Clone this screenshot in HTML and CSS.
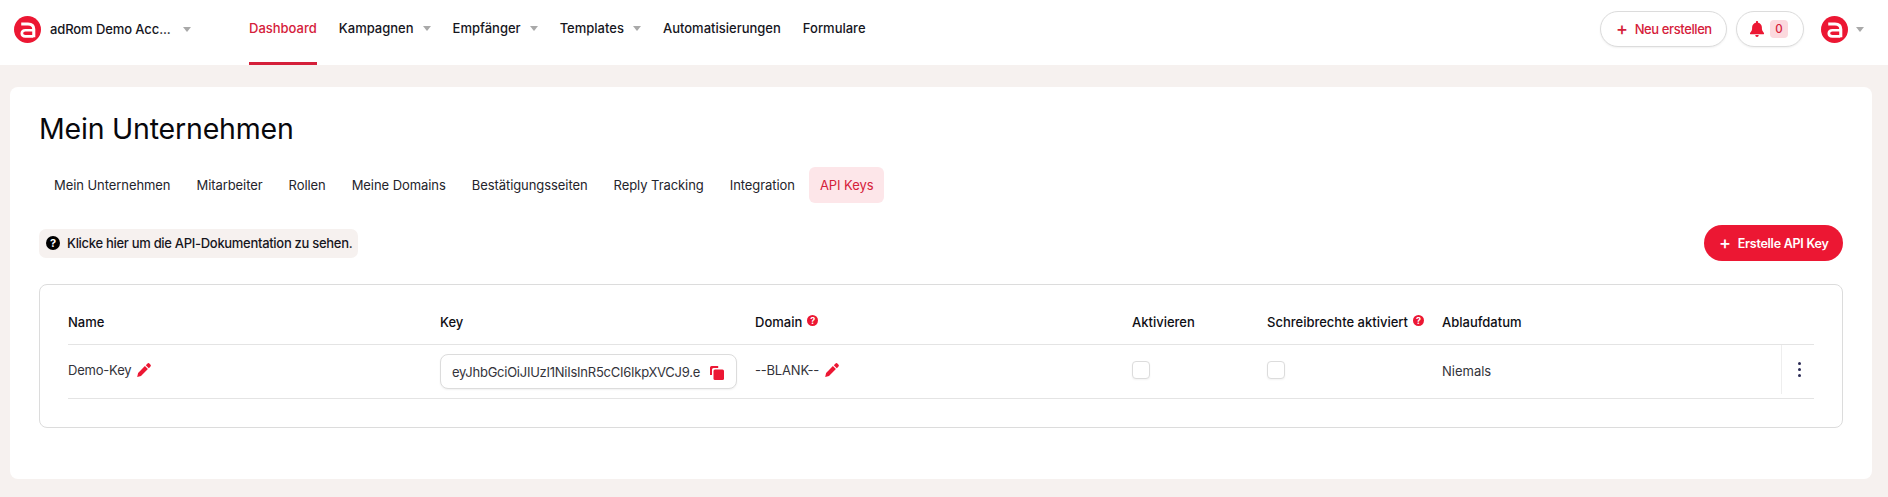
FILE: index.html
```html
<!DOCTYPE html>
<html lang="de">
<head>
  <meta charset="UTF-8" />
  <meta name="viewport" content="width=device-width, initial-scale=1.0"/>
  <title>API Keys</title>
  <link rel="stylesheet" href="styles.css">
</head>
<body>
  <header class="topbar">
    <div class="account">
      <svg class="logo" viewBox="0 0 28 28"><circle cx="14" cy="14" r="14" fill="#ec1733"/><path d="M7.500 8.300h7c3.700 0 6 2 6 5.400v8.300" fill="none" stroke="#fff" stroke-width="3.200"/><path d="M20 14.800h-8.200c-2.200 0-3.700 1.200-3.700 3.200s1.500 3.200 3.700 3.200H20" fill="none" stroke="#fff" stroke-width="2.800"/></svg>
      <span class="account-name">adRom Demo Acc...</span>
      <span class="caret"></span>
    </div>
    <nav class="nav">
      <a class="nav-item active">Dashboard</a>
      <a class="nav-item">Kampagnen<span class="caret"></span></a>
      <a class="nav-item">Empfänger<span class="caret"></span></a>
      <a class="nav-item">Templates<span class="caret"></span></a>
      <a class="nav-item">Automatisierungen</a>
      <a class="nav-item">Formulare</a>
    </nav>
    <div class="top-actions">
      <button class="pill-btn new-btn"><span class="plus">+</span>Neu erstellen</button>
      <button class="pill-btn bell-btn">
        <svg class="bell" viewBox="0 0 14 16"><path d="M7 0c.7 0 1.100.5 1.100 1.100v.6c2.300.5 3.800 2.400 3.800 4.700v.9c0 1.500.5 2.900 1.500 4l.4.4c.3.300.3.700.2 1-.1.400-.5.600-.9.600H.9c-.4 0-.8-.2-.9-.6-.1-.3-.1-.7.2-1l.4-.4c1-1.100 1.500-2.500 1.500-4v-.9c0-2.300 1.500-4.200 3.800-4.700v-.6C5.900.5 6.300 0 7 0zM5.300 14h3.400c0 1-.8 2-1.700 2s-1.700-1-1.700-2z" fill="#ec1733"/></svg>
        <span class="count">0</span>
      </button>
      <svg class="logo avatar" viewBox="0 0 28 28"><circle cx="14" cy="14" r="14" fill="#ec1733"/><path d="M7.500 8.300h7c3.700 0 6 2 6 5.400v8.300" fill="none" stroke="#fff" stroke-width="3.200"/><path d="M20 14.800h-8.200c-2.200 0-3.700 1.200-3.700 3.200s1.500 3.200 3.700 3.200H20" fill="none" stroke="#fff" stroke-width="2.800"/></svg>
      <span class="caret"></span>
    </div>
  </header>

  <main class="card">
    <h1>Mein Unternehmen</h1>

    <div class="tabs">
      <a class="tab">Mein Unternehmen</a>
      <a class="tab">Mitarbeiter</a>
      <a class="tab">Rollen</a>
      <a class="tab">Meine Domains</a>
      <a class="tab">Bestätigungsseiten</a>
      <a class="tab">Reply Tracking</a>
      <a class="tab">Integration</a>
      <a class="tab active">API Keys</a>
    </div>

    <div class="toolbar">
      <div class="doc-hint"><span class="help dark">?</span>Klicke hier um die API-Dokumentation zu sehen.</div>
      <button class="create-btn"><span class="plus">+</span>Erstelle API Key</button>
    </div>

    <section class="table-box">
      <div class="row head">
        <div>Name</div>
        <div>Key</div>
        <div>Domain<span class="help">?</span></div>
        <div>Aktivieren</div>
        <div>Schreibrechte aktiviert<span class="help">?</span></div>
        <div>Ablaufdatum</div>
        <div></div>
      </div>
      <div class="row body">
        <div class="cell-name">Demo-Key<svg class="pencil" viewBox="0 0 14 14"><path d="M10.300.7a1.600 1.600 0 0 1 2.300 0l.7.700a1.600 1.600 0 0 1 0 2.300l-1.500 1.500-3-3zM7.900 3.100l3 3-6.900 6.900-3.800.9.900-3.800z" fill="#ec1733"/></svg></div>
        <div>
          <div class="key-field">
            <span class="key-text">eyJhbGciOiJIUzI1NiIsInR5cCI6IkpXVCJ9.e</span>
            <svg class="copy" viewBox="0 0 14 14"><path d="M1.500 0h6.700v2H3.600A1.600 1.600 0 0 0 2 3.600V9H0V1.500A1.500 1.500 0 0 1 1.500 0z" fill="#ec1733"/><rect x="3.500" y="3.500" width="10.500" height="10.500" rx="1.500" fill="#ec1733"/></svg>
          </div>
        </div>
        <div class="cell-domain">--BLANK--<svg class="pencil" viewBox="0 0 14 14"><path d="M10.300.7a1.600 1.600 0 0 1 2.300 0l.7.700a1.600 1.600 0 0 1 0 2.300l-1.500 1.500-3-3zM7.900 3.100l3 3-6.900 6.900-3.800.9.900-3.800z" fill="#ec1733"/></svg></div>
        <div><span class="check"></span></div>
        <div><span class="check"></span></div>
        <div class="cell-expiry">Niemals</div>
        <div class="cell-menu"><span class="dots"><i></i><i></i><i></i></span></div>
      </div>
    </section>
  </main>
</body>
</html>
```

FILE: styles.css
```css
* { box-sizing: border-box; }
html, body { height: 100%; }
body { margin: 0; background: #f6f1ef; font-family: "Inter", "Liberation Sans", sans-serif; font-size: 13px; color: #16161d; overflow: hidden; }
button { font-family: inherit; cursor: pointer; }

.topbar { height: 65px; background: #fff; display: flex; align-items: flex-start; padding: 0 24px 0 14px; }
.account { display: flex; align-items: center; width: 235px; height: 58px; }
.logo { width: 27px; height: 27px; flex: none; }
.account-name { margin-left: 9px; font-weight: 500; width: 133px; white-space: nowrap; letter-spacing: -0.1px; }
.caret { display: inline-block; width: 0; height: 0; border-left: 4px solid transparent; border-right: 4px solid transparent; border-top: 5px solid #a9a9a9; }
.nav { display: flex; height: 65px; gap: 22px; }
.nav-item { display: flex; align-items: center; gap: 9px; font-weight: 500; white-space: nowrap; border-bottom: 3px solid transparent; padding-bottom: 6px; }
.nav-item.active { color: #d5203a; border-bottom-color: #d5203a; }

.top-actions { margin-left: auto; height: 58px; display: flex; align-items: center; }
.pill-btn { height: 36px; background: #fff; border: 1px solid #dcdcdc; border-radius: 18px; box-shadow: 0 1px 2px rgba(0,0,0,0.06); display: flex; align-items: center; color: #d5203a; font-size: 13px; font-weight: 500; }
.new-btn { width: 127px; padding: 0 0 0 15px; letter-spacing: -0.4px; white-space: nowrap; }
.plus { font-size: 18px; line-height: 1; margin-right: 7px; font-weight: 500; }
.bell-btn { width: 68px; margin-left: 9px; padding: 0 0 0 13px; }
.bell { width: 14px; height: 16px; }
.count { margin-left: 6px; width: 18px; height: 18px; line-height: 18px; background: #fcd9de; border-radius: 4px; font-size: 11.500px; text-align: center; }
.avatar { margin-left: 17px; }
.top-actions .caret { margin-left: 8px; }

.card { margin: 22px 16px 18px 10px; height: 392px; background: #fff; border-radius: 8px; padding: 23px 29px; }
h1 { margin: 0; font-size: 28.500px; font-weight: 400; line-height: 38px; color: #08080c; letter-spacing: -0.2px; }

.tabs { display: flex; gap: 3px; margin-top: 19px; padding-left: 3.500px; }
.tab { height: 36px; line-height: 36px; padding: 0 11.500px; border-radius: 6px; color: #24242b; white-space: nowrap; letter-spacing: -0.07px; }
.tab.active { background: #fde6e9; color: #d5203a; padding: 0 10.500px; }

.toolbar { display: flex; justify-content: space-between; align-items: center; margin-top: 22px; }
.doc-hint { display: flex; align-items: center; height: 29px; padding: 0 6px 0 7px; background: #f6f1ef; border-radius: 7px; font-weight: 500; letter-spacing: -0.3px; }
.help { display: inline-block; width: 11px; height: 11px; border-radius: 50%; background: #ec1733; color: #fff; font-size: 9px; line-height: 11px; text-align: center; font-weight: 700; margin-left: 5px; vertical-align: 3px; letter-spacing: 0; }
.help.dark { width: 14px; height: 14px; line-height: 14px; font-size: 11px; background: #000; margin: 0 7px 0 0; vertical-align: 0; }
.create-btn { width: 139px; height: 36px; background: #ec1733; color: #fff; border: none; border-radius: 18px; font-size: 12.500px; font-weight: 600; letter-spacing: -0.25px; display: flex; align-items: center; padding: 0 0 0 15px; white-space: nowrap; }
.create-btn .plus { margin-right: 7px; }

.table-box { margin-top: 23px; height: 144px; border: 1px solid #dcdcdc; border-radius: 8px; padding: 0 28px; }
.row { display: grid; grid-template-columns: 372px 315px 377px 135px 175px 339px 35px; }
.row.head { height: 60px; align-items: center; padding-top: 14px; font-weight: 500; border-bottom: 1px solid #e4e4e4; color: #0e0e14; }
.row.body { height: 54px; border-bottom: 1px solid #e4e4e4; color: #33333a; }
.cell-name, .cell-domain { display: flex; align-items: center; height: 50px; letter-spacing: -0.2px; }
.pencil { width: 14px; height: 14px; margin-left: 6px; }
.key-field { display: flex; align-items: center; width: 297px; height: 35px; margin-top: 9px; padding: 0 12px 0 11px; background: #fff; border: 1px solid #dcdcdc; border-radius: 8px; box-shadow: 0 1px 2px rgba(0,0,0,0.06); }
.key-text { white-space: nowrap; letter-spacing: -0.25px; }
.copy { width: 14px; height: 14px; margin-left: auto; margin-top: 2px; }
.check { display: block; width: 18px; height: 18px; margin-top: 16px; background: #fff; border: 1px solid #dcdcdc; border-radius: 4px; box-shadow: 0 1px 2px rgba(0,0,0,0.05); }
.cell-expiry { padding-top: 18px; }
.cell-menu { display: flex; justify-content: center; align-items: center; height: 49px; border-left: 1px solid #eee; }
.dots { display: flex; flex-direction: column; gap: 3px; }
.dots i { width: 3px; height: 3px; border-radius: 50%; background: #2b2b55; }
```
